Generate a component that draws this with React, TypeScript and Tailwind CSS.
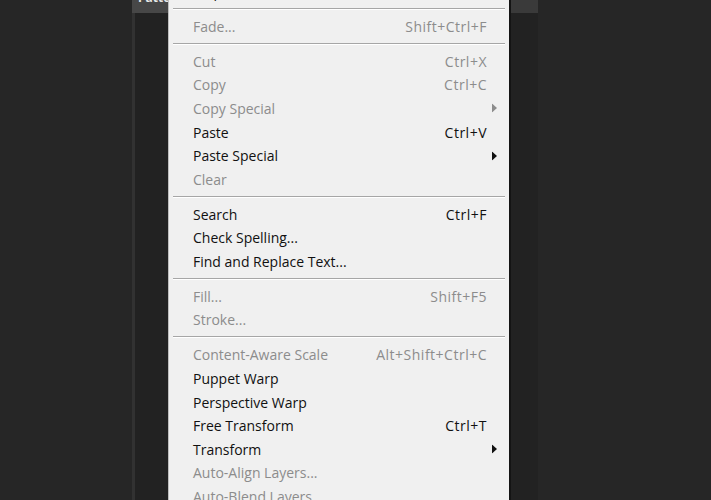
import React from "react";

type Item =
  | { sep: true }
  | { label: string; shortcut?: string; sub?: boolean; off?: boolean; sep?: false };

const items: Item[] = [
  { label: "Step Backward", shortcut: "Alt+Ctrl+Z" },
  { sep: true },
  { label: "Fade...", shortcut: "Shift+Ctrl+F", off: true },
  { sep: true },
  { label: "Cut", shortcut: "Ctrl+X", off: true },
  { label: "Copy", shortcut: "Ctrl+C", off: true },
  { label: "Copy Special", sub: true, off: true },
  { label: "Paste", shortcut: "Ctrl+V" },
  { label: "Paste Special", sub: true },
  { label: "Clear", off: true },
  { sep: true },
  { label: "Search", shortcut: "Ctrl+F" },
  { label: "Check Spelling..." },
  { label: "Find and Replace Text..." },
  { sep: true },
  { label: "Fill...", shortcut: "Shift+F5", off: true },
  { label: "Stroke...", off: true },
  { sep: true },
  { label: "Content-Aware Scale", shortcut: "Alt+Shift+Ctrl+C", off: true },
  { label: "Puppet Warp" },
  { label: "Perspective Warp" },
  { label: "Free Transform", shortcut: "Ctrl+T" },
  { label: "Transform", sub: true },
  { label: "Auto-Align Layers...", off: true },
  { label: "Auto-Blend Layers...", off: true },
  { label: "Define Brush Preset...", off: true },
];

function Arrow({ off }: { off?: boolean }) {
  return (
    <svg width="5" height="9" viewBox="0 0 5 9" className="absolute right-[12px] top-1/2 -translate-y-1/2">
      <path d="M0 0 L5 4.5 L0 9 Z" fill={off ? "#8c8c8c" : "#111111"} />
    </svg>
  );
}

export default function App() {
  return (
    <div
      className="relative w-[711px] h-[500px] overflow-hidden bg-[#262626]"
      style={{ fontFamily: '"Open Sans", "Noto Sans", sans-serif' }}
    >
      {/* panel behind the menu */}
      <div className="ml-[132px] w-[406px] h-full flex flex-col">
        <div className="h-[13px] bg-[#474747] overflow-hidden flex">
          <div className="pl-[6px] -mt-[10px] text-[12px] font-bold text-[#e8e8e8] leading-[16px] flex-1">Patterns</div>
          <div className="w-[27px] bg-[#3a3a3a]" />
        </div>
        <div className="flex-1 bg-[#222222] border-l-[3px] border-[#323232]" />
      </div>

      {/* Edit menu */}
      <div className="absolute left-[168px] top-[-20.5px] w-[343px] bg-[#f0f0f0] border-l border-[#bdbdbd] border-r-2 border-r-[#141414]">
        {items.map((it, i) =>
          it.sep ? (
            <div key={i} className="h-[11.4px] flex items-center px-[4px]">
              <div className="w-full h-[2px] border-t border-[#a6a6a6] border-b border-b-white" />
            </div>
          ) : (
            <div
              key={i}
              className={
                "relative h-[23.6px] flex items-center pl-[24px] pr-[22px] text-[14px] " +
                (it.off ? "text-[#8c8c8c]" : "text-[#111111]")
              }
            >
              <span className="flex-1 whitespace-nowrap">{it.label}</span>
              {it.shortcut && <span className="whitespace-nowrap tracking-[0.5px]">{it.shortcut}</span>}
              {it.sub && <Arrow off={it.off} />}
            </div>
          )
        )}
      </div>
    </div>
  );
}
